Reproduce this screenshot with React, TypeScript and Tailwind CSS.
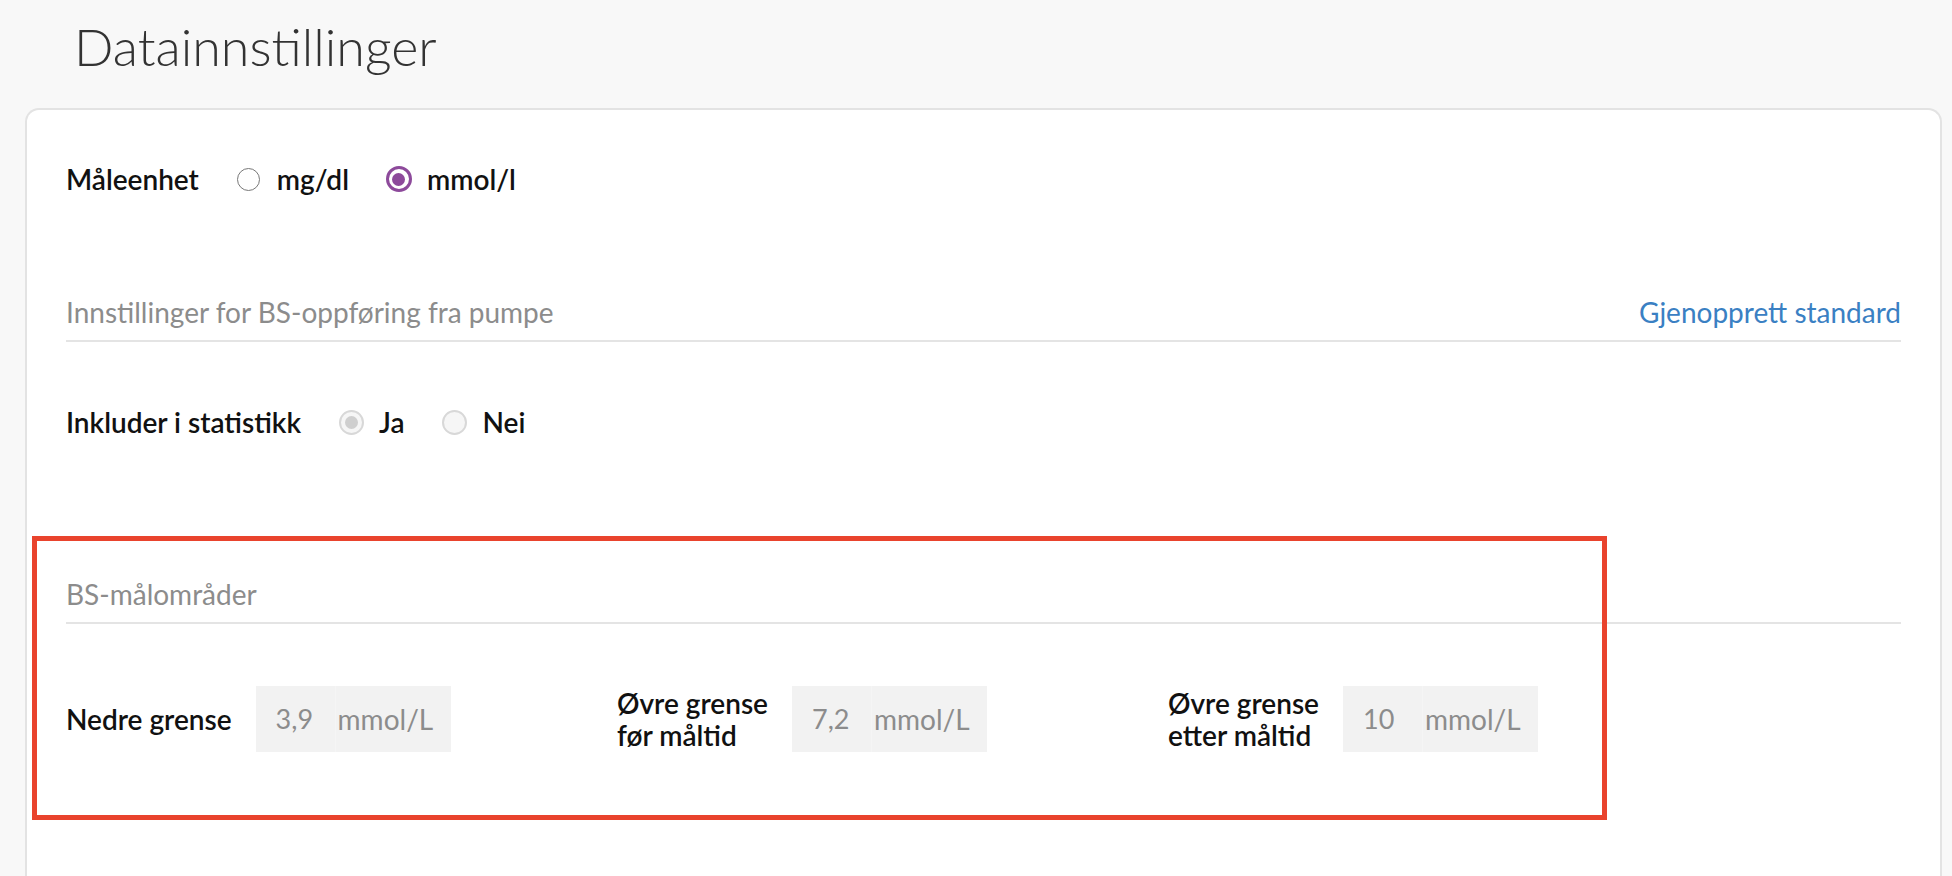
import React from 'react';

function Radio({ checked, disabled }: { checked?: boolean; disabled?: boolean }) {
  let dot: React.ReactNode;
  if (disabled) {
    dot = (
      <span className="flex h-[25px] w-[25px] items-center justify-center rounded-full border-2 border-[#d8d8d8] bg-[#f6f6f6]">
        {checked && <span className="h-[13px] w-[13px] rounded-full bg-[#cfcfcf]" />}
      </span>
    );
  } else if (checked) {
    dot = (
      <span className="flex h-[26px] w-[26px] items-center justify-center rounded-full border-[3px] border-[#8d4a9b] bg-white">
        <span className="h-[13px] w-[13px] rounded-full bg-[#8d4a9b]" />
      </span>
    );
  } else {
    dot = <span className="h-[23px] w-[23px] rounded-full border-[1.5px] border-[#777777] bg-white" />;
  }
  return <span className="flex h-[26px] w-[26px] shrink-0 items-center justify-center">{dot}</span>;
}

function Option({ label, checked, disabled }: { label: string; checked?: boolean; disabled?: boolean }) {
  return (
    <label className="ml-[37px] flex items-center gap-[15px]">
      <Radio checked={checked} disabled={disabled} />
      <span>{label}</span>
    </label>
  );
}

function SectionHeader({ title, action }: { title: string; action?: string }) {
  return (
    <div className="flex items-end justify-between border-b-2 border-[#e4e4e4] pb-[12px]">
      <span className="text-[28px] leading-[32px] text-[#8c8c8c]">{title}</span>
      {action && <a className="text-[28px] leading-[32px] text-[#3a80c3]">{action}</a>}
    </div>
  );
}

function UnitInput({ value }: { value: string }) {
  return (
    <div className="flex h-[66px] bg-[#f2f2f2] text-[#8c8c8c]">
      <span className="flex w-[79px] items-center pl-[20px] text-[27px]">{value}</span>
      <span className="flex w-[116px] items-center border-l border-[#f5f5f5] pl-[2px] text-[28px]">mmol/L</span>
    </div>
  );
}

const FIELDS = [
  { label: ['Nedre grense'], value: '3,9' },
  { label: ['Øvre grense', 'før måltid'], value: '7,2' },
  { label: ['Øvre grense', 'etter måltid'], value: '10' },
];

export default function App() {
  return (
    <div className="relative flex h-[876px] flex-col overflow-hidden bg-[#f8f8f8] font-['Lato','Liberation_Sans',sans-serif]">
      <h1 className="pl-[74px] pt-[15px] text-[52px] font-light leading-[62px] text-[#333333]">Datainnstillinger</h1>

      <div className="ml-[25px] mr-[10px] mt-[31px] flex-1 rounded-t-[14px] border-2 border-b-0 border-[#e3e3e3] bg-white px-[39px] pt-[41px]">
        {/* Måleenhet */}
        <div className="flex h-[56px] items-center text-[28px] font-semibold text-[#111]">
          <span>Måleenhet</span>
          <Option label="mg/dl" />
          <Option label="mmol/l" checked />
        </div>

        <div className="mt-[89px]">
          <SectionHeader title="Innstillinger for BS-oppføring fra pumpe" action="Gjenopprett standard" />
        </div>

        <div className="mt-[52px] flex h-[56px] items-center text-[28px] font-semibold text-[#111]">
          <span>Inkluder i statistikk</span>
          <Option label="Ja" checked disabled />
          <Option label="Nei" disabled />
        </div>

        <div className="mt-[128px]">
          <SectionHeader title="BS-målområder" />
        </div>

        <div className="mt-[62px] flex">
          {FIELDS.map((f, i) => (
            <div key={i} className="flex w-[551px] items-center gap-[24px]">
              <div className="text-[28px] font-semibold leading-[32px] text-[#111]">
                {f.label.map((l) => (
                  <div key={l}>{l}</div>
                ))}
              </div>
              <UnitInput value={f.value} />
            </div>
          ))}
        </div>
      </div>

      {/* highlight annotation */}
      <div className="pointer-events-none absolute left-[32px] top-[536px] h-[284px] w-[1575px] border-[5px] border-[#e9432d]" />
    </div>
  );
}
